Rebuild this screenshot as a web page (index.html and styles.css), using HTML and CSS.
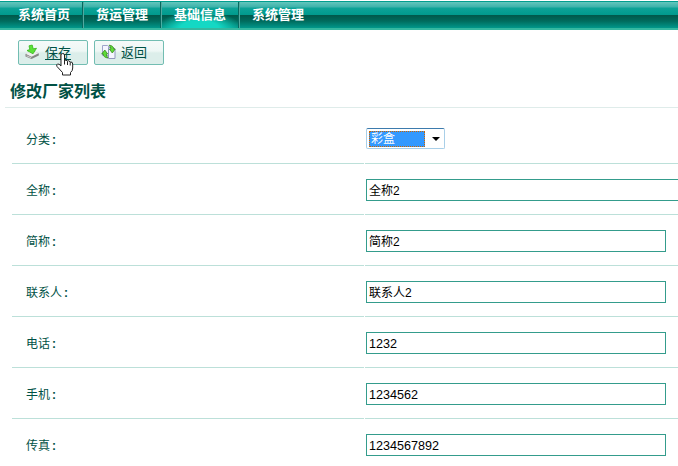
FILE: index.html
```html
<!DOCTYPE html>
<html lang="zh-CN">
<head>
<meta charset="utf-8">
<title>修改厂家列表</title>
<link rel="stylesheet" href="styles.css">
</head>
<body>
<nav class="nav">
  <a class="tab">系统首页</a>
  <a class="tab">货运管理</a>
  <a class="tab active">基础信息</a>
  <a class="tab last">系统管理</a>
</nav>
<div class="toolbar">
  <a class="btn hover">
    <svg class="icon" width="16" height="16" viewBox="0 0 16 16">
      <path d="M.500 10L8 6.500L13.800 9.500V11.500L6.500 15L.500 12.500Z" fill="#858585"/>
      <path d="M.500 9.800L8 6.200L13.500 9.300L6.500 12.700Z" fill="#eeeeee"/>
      <path d="M1.500 11.300L6.200 13.300V14.300L1.500 12.300Z" fill="#d2d2d2"/>
      <path d="M4 1.800L7.200 1L8.200 4.800L11.500 4.300L8 9.800L2 6.500L4.800 5.500Z" fill="#5be238" stroke="#36b61c" stroke-width=".8"/>
    </svg>
    <span>保存</span>
    <svg class="cursor" width="18" height="23" viewBox="0 0 18 23">
      <path d="M5 13V2Q5 .500 6.700 .500T8.500 2V7.500Q10 6.500 11.300 8Q12.800 7 14.200 9Q16.700 8.500 16.700 11V15Q16.700 18 14.500 19.500V22H6.500V19.500L1 13.500Q0 11.500 1.500 11Q3 10.500 5 13Z" fill="#fff" stroke="#222"/>
      <path d="M8.500 7V11.500M11.500 8.300V12M14.200 9.200V12.500" fill="none" stroke="#222"/>
    </svg>
  </a>
  <a class="btn">
    <svg class="icon" width="16" height="16" viewBox="0 0 16 16">
      <path d="M1.500 1.500H6.500L9 4V11.500H1.500Z" fill="#f5f6ff" stroke="#a0a4cb"/>
      <path d="M7.500 3.500H12.500L14 5V14.500H7.500Z" fill="#f5f6ff" stroke="#9296bf"/>
      <path d="M3.800 6L6.700 10H5.300Q5.300 12 7 14Q2.300 13.500 2.300 10H.700Z" fill="#5fdc38" stroke="#388b20" stroke-width=".8"/>
      <path d="M8 1.200Q12.400 1.500 12.700 5H14.200L11.300 9L8.300 5H9.900Q9.800 3 8 1.200Z" fill="#5fdc38" stroke="#388b20" stroke-width=".8"/>
    </svg>
    <span>返回</span>
  </a>
</div>
<h1 class="title">修改厂家列表</h1>
<form class="form">
  <div class="row"><label class="name">分类<b class="colon">:</b></label><div class="field"><div class="select"><span class="value">彩盒</span><i class="arrow"></i></div></div></div>
  <div class="row"><label class="name">全称<b class="colon">:</b></label><div class="field"><div class="input wide">全称2</div></div></div>
  <div class="row"><label class="name">简称<b class="colon">:</b></label><div class="field"><div class="input">简称2</div></div></div>
  <div class="row"><label class="name">联系人<b class="colon">:</b></label><div class="field"><div class="input">联系人2</div></div></div>
  <div class="row"><label class="name">电话<b class="colon">:</b></label><div class="field"><div class="input num">1232</div></div></div>
  <div class="row"><label class="name">手机<b class="colon">:</b></label><div class="field"><div class="input num">1234562</div></div></div>
  <div class="row"><label class="name">传真<b class="colon">:</b></label><div class="field"><div class="input num">1234567892</div></div></div>
</form>
</body>
</html>
```
FILE: styles.css
```css
* { box-sizing: border-box; }
html, body { overflow: hidden; }
body {
  margin: 0;
  padding-top: 1px;
  width: 678px;
  height: 466px;
  background: #fff;
  color: #005145;
  font: 12px/16px "Liberation Sans", "Noto Sans CJK SC", sans-serif;
}
.nav {
  display: flex;
  height: 29px;
  padding-left: 5px;
  border-top: 1px solid #009e8e;
  border-bottom: 2px solid #35b8a0;
  background: linear-gradient(#62c6bd 0, #3db2aa 5px, #0da397 6px, #009a8d 13px, #00584a 13px, #006b5d 19px, #00978a 26px);
}
.tab {
  width: 78px;
  padding: 5px 0 0 13px;
  border-right: 1px solid #05695f;
  box-shadow: 1px 0 #52a99f;
  color: #fff;
  font-size: 13px;
  font-weight: bold;
  white-space: nowrap;
}
.active { background: radial-gradient(ellipse 42px 17px at 50% 100%, #14d8c4 45%, #14d8c400 100%); }
.last { border: 0; box-shadow: none; }
.toolbar {
  display: flex;
  gap: 6px;
  padding: 10px 0 0 18px;
}
.btn {
  position: relative;
  display: flex;
  align-items: center;
  width: 70px;
  height: 25px;
  padding-left: 6px;
  border: 1px solid #72bdb2;
  border-radius: 2px;
  background: linear-gradient(#f5faf9 0, #eef7f5 10px, #dceeea 12px, #dceeea 100%);
  font-size: 13px;
}
.icon { flex: none; margin: -1px 4px 0 0; }
.hover span { text-decoration: underline; text-underline-offset: 2px; }
.cursor { position: absolute; left: 37px; top: 12px; }
.title {
  height: 43px;
  margin: 0 0 0 5px;
  padding: 17px 0 0 5px;
  border-bottom: 1px solid #dfecea;
  font-size: 16px;
  line-height: 20px;
}
.form { padding-left: 12px; margin-top: 5px; }
.row {
  display: grid;
  grid-template-columns: 352px 1fr;
  column-gap: 1px;
  height: 51px;
}
.name, .field {
  display: flex;
  align-items: center;
  border-bottom: 1px solid #bce0d9;
}
.name { padding: 3px 0 0 14px; }
.colon { margin-left: 2px; }
.field { padding: 1px 0 0 1px; }
.input {
  flex: none;
  width: 300px;
  height: 22px;
  padding: 2px;
  border: 1px solid #349c8c;
  color: #000;
  font-size: 12px;
  line-height: 18px;
}
.wide { width: 330px; }
.num { font-size: 12.600px; }
.select {
  display: flex;
  align-items: center;
  width: 79px;
  height: 21px;
  padding-left: 2px;
  border: 1px solid #a9cfe8;
  border-top-color: #3d7bad;
  border-radius: 2px;
}
.value {
  width: 56px;
  height: 16px;
  padding-left: 1px;
  border: 1px dotted #cc6600;
  background: #3399ff;
  color: #fff;
  line-height: 15px;
}
.arrow {
  margin-left: 7px;
  border: 4px solid transparent;
  border-top-color: #000;
  border-bottom: 0;
}
```
